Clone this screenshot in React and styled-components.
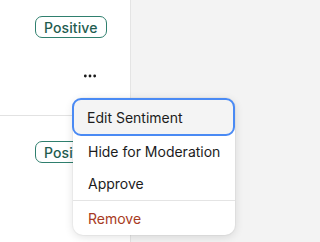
import React from 'react';
import styled, { createGlobalStyle } from 'styled-components';
import { Ellipsis } from 'lucide-react';

const GlobalStyle = createGlobalStyle`
  body {
    margin: 0;
    font-family: Inter, "Noto Sans", sans-serif;
    background: #f3f3f3;
  }
`;

const App = () => {
    return (
        <>
            <GlobalStyle />
            <Page>
                <Column>
                    <Row $top={16} $height={116}>
                        <Badge>Positive</Badge>
                        <MoreButton>
                            <Ellipsis size={16} strokeWidth={2.2} />
                        </MoreButton>
                    </Row>
                    <Row $top={25}>
                        <Badge>Positive</Badge>
                    </Row>
                </Column>
                <Side />
                <Menu>
                    <Item $active>Edit Sentiment</Item>
                    <Item $height={31}>Hide for Moderation</Item>
                    <Item>Approve</Item>
                    <Separator />
                    <Item $danger $height={34}>Remove</Item>
                </Menu>
            </Page>
        </>
    );
}

const Page = styled.div`
  position: relative;
  display: flex;
  width: 100%;
  min-width: 246px;
  height: 100vh;
  min-height: 242px;
  overflow: hidden;
`;

const Column = styled.div`
  width: 130px;
  flex: none;
  border-right: 1px solid #e4e4e4;
  background: #fff;
  display: flex;
  flex-direction: column;
`;

const Side = styled.div`
  flex: 1;
  background: #f3f3f3;
`;

const Row = styled.div`
  display: flex;
  flex-direction: column;
  align-items: flex-start;
  padding: ${p => p.$top}px 0 0 35px;
  height: ${p => (p.$height ? `${p.$height}px` : 'auto')};
  box-sizing: border-box;
  border-bottom: ${p => (p.$height ? '1px solid #e2e2e2' : 'none')};
  flex: ${p => (p.$height ? 'none' : 1)};
`;

const Badge = styled.span`
  display: inline-flex;
  align-items: center;
  height: 22px;
  box-sizing: border-box;
  padding: 0 8px;
  border: 1px solid #2f7f6e;
  border-radius: 7px;
  color: #1f5d50;
  font-size: 14px;
  font-weight: 500;
  letter-spacing: 0.1px;
`;

const MoreButton = styled.span`
  display: flex;
  margin: 30px 0 0 47px;
  color: #1a1a1a;
`;

const Menu = styled.div`
  position: absolute;
  left: 73px;
  top: 98px;
  width: 162px;
  background: #fff;
  border-radius: 10px;
  box-shadow: 0 2px 10px rgba(0, 0, 0, 0.12), 0 0 0 1px rgba(0, 0, 0, 0.03);
  display: flex;
  flex-direction: column;
`;

const Item = styled.div`
  display: flex;
  align-items: center;
  height: ${p => (p.$active ? 38 : p.$height || 32)}px;
  box-sizing: border-box;
  padding-left: ${p => (p.$active ? 13 : 15)}px;
  margin: ${p => (p.$active ? '0 0 0 -1px' : '0')};
  font-size: 14px;
  color: ${p => (p.$danger ? '#a83a22' : '#1c1c1c')};
  background: ${p => (p.$active ? '#f4f4f4' : 'transparent')};
  border: ${p => (p.$active ? '2px solid #4a8af4' : 'none')};
  border-radius: ${p => (p.$active ? '9px' : '0')};
  white-space: nowrap;
`;

const Separator = styled.div`
  height: 1px;
  background: #e4e4e4;
  margin-top: 1px;
`;

export default App;
